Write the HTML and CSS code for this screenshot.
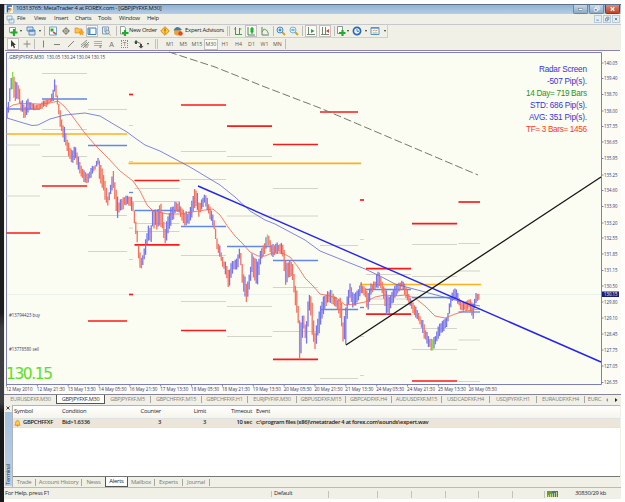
FILE: index.html
```html
<!DOCTYPE html>
<html lang="en">
<head>
<meta charset="utf-8">
<title>MetaTrader 4</title>
<link rel="stylesheet" href="styles.css">
</head>
<body>
<div class="window">
  <header class="titlebar">
    <svg class="applogo" viewBox="0 0 8 8"><rect width="8" height="8" fill="#f7f3dc"/><path d="M2.5 7.5V1H7M2.5 4H6" stroke="#2f58b0" stroke-width="1.6" fill="none"/><path d="M5 3l2 1-3 4" fill="#f0a020"/></svg>
    <span class="caption">10313765: MetaTrader 4 at FOREX.com - [GBPJPYFXF,M30]</span>
    <div class="winbtns">
      <i><svg viewBox="0 0 15 9"><rect x="5" y="4" width="5" height="2" fill="#fff" stroke="#567" stroke-width=".5"/></svg></i>
      <i><svg viewBox="0 0 15 9"><path d="M6.500 4V2h4v3.500h-2M5 4h3.500v3H5z" fill="none" stroke="#f4f8ff"/><path d="M5.500 5h2v1h-2z" fill="#456"/></svg></i>
      <i class="close"><svg viewBox="0 0 15 9"><path d="M5.500 2.500l4 4m0-4l-4 4" stroke="#fff" stroke-width="1.500"/></svg></i>
    </div>
  </header>
  <nav class="menubar">
    <svg viewBox="0 0 9 9" width="9" height="9"><path d="M1 1h5v4H1zM3 4h5v4H3z" fill="#e7f1f6" stroke="#7fa6c4" stroke-width=".8"/></svg>
    <span>File</span><span>View</span><span>Insert</span><span>Charts</span><span>Tools</span><span>Window</span><span>Help</span>
    <div class="mdi"><i><svg viewBox="0 0 8 8"><path d="M2 5.500h3" stroke="#53677f"/></svg></i><i><svg viewBox="0 0 8 8"><path d="M3.500 3V1.500h3v3H5M2 3.500h3v3H2z" fill="none" stroke="#53677f" stroke-width=".8"/></svg></i><i><svg viewBox="0 0 8 8"><path d="M2.500 2.500l3 3m0-3l-3 3" stroke="#53677f"/></svg></i></div>
  </nav>
  <div class="bar main">
    <svg viewBox="0 0 10 10"><path d="M1.500 1.500h6v5h-6z" fill="#fff" stroke="#8ca393"/><path d="M6 3v7M2.500 6.500h7" stroke="#1fae2c" stroke-width="2.200"/></svg>
    <b class="dd"></b>
    <svg viewBox="0 0 10 10"><path d="M1 1h6v4H1zM3 4h6v5H3z" fill="#cfe2f3" stroke="#5f8dbd"/><path d="M3 5h6" stroke="#3c78bd"/></svg>
    <b class="dd"></b><b class="sep"></b>
    <svg viewBox="0 0 10 10"><path d="M1.500 1h7v8h-7z" fill="#fff" stroke="#6fa5cf"/><path d="M2.500 2.500h3v3h-3z" fill="#23aa35"/><path d="M5 6l3 2" stroke="#e25022" stroke-width="1.600"/></svg>
    <svg viewBox="0 0 10 10"><circle cx="5" cy="5" r="2.500" fill="none" stroke="#78736a"/><path d="M5 1v8M1 5h8" stroke="#78736a" stroke-width=".8"/></svg>
    <svg viewBox="0 0 10 10"><path d="M1 2h3l1 1h3v4H1z" fill="#ffc247" stroke="#cb8521" stroke-width=".6"/><path d="M7.500 4l.8 1.800 1.600.1-1.200 1.200.4 2-1.600-1-1.600 1 .4-2L5 5.900l1.800-.1z" fill="#ffab19" stroke="#c97815" stroke-width=".4"/></svg>
    <svg class="on" viewBox="0 0 10 10"><path d="M1 2h8v6.500H1z" fill="#f8fcff" stroke="#3978b5"/><path d="M1.500 2.500h2v6h-2z" fill="#5897d3"/></svg>
    <svg viewBox="0 0 10 10"><path d="M1.500 1h6v7h-6z" fill="#e4edf5" stroke="#7d9dbd"/><path d="M3 3h3M3 5h2" stroke="#7296b8"/><circle cx="6.500" cy="6" r="1.800" fill="#cfe7ef" stroke="#77817b" stroke-width=".8"/><path d="M8 7.500l1.500 2" stroke="#d69a22"/></svg>
    <b class="sep"></b>
    <svg viewBox="0 0 10 10"><path d="M1.500.5h4l1 1.500v6h-5z" fill="#fff" stroke="#7d8a80" stroke-width=".8"/><path d="M6 4v6M3 7h6.500" stroke="#1fae2c" stroke-width="2.200"/></svg>
    <span>New Order</span>
    <svg viewBox="0 0 10 10"><path d="M5 .7L9.300 5 5 9.300.7 5z" fill="#ffcb3d" stroke="#d78b13"/><path d="M5 2.500v3M5 6.500v1" stroke="#a95a12" stroke-width="1.200"/></svg>
    <svg viewBox="0 0 10 10"><circle cx="4.500" cy="6" r="3.500" fill="#e8a340"/><path d="M.5 4.500Q2 1 4.500 1T9 4z" fill="#3e7db3"/><circle cx="7.500" cy="7.500" r="2.200" fill="#e9451f"/></svg>
    <span>Expert Advisors</span>
    <b class="sep dbl"></b>
    <svg viewBox="0 0 10 10"><path d="M2.500 1v8M6.500 2v6M2 8.500h7M2.500 3H1M6.500 3h2" stroke="#4c9658" fill="none"/></svg>
    <svg class="on" viewBox="0 0 10 10"><path d="M2 1v8h7" stroke="#4c8458" fill="none"/><path d="M6 1v7" stroke="#10891a"/><path d="M4.500 2h3v4.500h-3z" fill="#18b525"/></svg>
    <svg viewBox="0 0 10 10"><path d="M2 1v8h7" stroke="#627d67" fill="none"/><path d="M2 6l2-3 3 1.500 1.500 3.500" fill="none" stroke="#63a36d"/></svg>
    <b class="sep"></b>
    <svg viewBox="0 0 10 10"><path d="M6 6l3 3" stroke="#d7a021" stroke-width="1.800"/><circle cx="4" cy="4" r="3" fill="#dff1fa" stroke="#428ac3"/><path d="M2.500 4h3M4 2.500v3" stroke="#1674bd"/></svg>
    <svg viewBox="0 0 10 10"><path d="M6 6l3 3" stroke="#d7a021" stroke-width="1.800"/><circle cx="4" cy="4" r="3" fill="#dff1fa" stroke="#74b3d9"/><path d="M2.500 4h3" stroke="#1674bd"/></svg>
    <b class="sep"></b>
    <svg class="on" viewBox="0 0 10 10"><path d="M2.500 1v8M1 8.500h8" stroke="#75847b"/><path d="M5 3l3.500 2L5 7z" fill="#29a33b"/></svg>
    <svg class="on" viewBox="0 0 10 10"><path d="M2.500 1v8M1 8.500h8M5.500 1v7" stroke="#75847b"/><path d="M9 3L6 5l3 2z" fill="#cc4939"/></svg>
    <b class="sep"></b>
    <svg viewBox="0 0 10 10"><path d="M1.500.5h5v7h-5z" fill="#fff" stroke="#8b958d"/><path d="M6.500 4v6M3 7h6.500" stroke="#1fae2c" stroke-width="2.200"/></svg>
    <b class="dd"></b>
    <svg viewBox="0 0 10 10"><circle cx="5" cy="5" r="3.600" fill="#eef7ff" stroke="#2469bd" stroke-width="1.700"/><path d="M5 3v2.300h2" stroke="#345" fill="none" stroke-width=".7"/></svg>
    <b class="dd"></b>
    <svg viewBox="0 0 10 10"><path d="M1 1.500h8v7H1z" fill="#fff" stroke="#6291bd"/><path d="M1 2h8" stroke="#5b93d1" stroke-width="1.500"/><path d="M2.500 5l2-1 1 1 2-1" stroke="#cb6d3c" stroke-width=".7" fill="none"/><path d="M2.500 7h5" stroke="#60a065" stroke-width=".8"/></svg>
    <b class="dd"></b>
  </div>
  <div class="bar tools">
    <svg class="on" viewBox="0 0 10 10"><path d="M3 1v7l1.700-1.500 1.200 2.700 1.200-.6L6 6h2z" fill="#3c3a37"/></svg>
    <svg viewBox="0 0 10 10"><path d="M5 1.500v7M1.500 5h7" stroke="#85817a" stroke-width=".9"/></svg>
    <b class="sep"></b>
    <svg viewBox="0 0 10 10"><path d="M5.500 1.500v7" stroke="#85817a"/></svg>
    <svg viewBox="0 0 10 10"><path d="M2 5.500h6" stroke="#85817a"/></svg>
    <svg viewBox="0 0 10 10"><path d="M2 8l6-6" stroke="#85817a"/></svg>
    <svg viewBox="0 0 10 10"><path d="M1 6l6-5M3 9l6-6M1 8l6-5M4 6h5M5 8h3" stroke="#77736d" stroke-width=".8"/></svg>
    <svg viewBox="0 0 10 10"><path d="M1 2.500h8M1 4.500h8M1 6.500h6" stroke="#aaa59b" stroke-width=".9"/><path d="M7 9V6.500h2M7 8h1.500" stroke="#77736d" stroke-width=".7" fill="none"/></svg>
    <em>A</em><em class="boxed">T</em>
    <svg viewBox="0 0 10 10"><path d="M2 1l2.500 2.500H3V5H1V3.500H0zM6 5h2v2h1.500L7 9.500 4.500 7H6z" fill="#4c4944"/><path d="M4 3.500l3 1" stroke="#777"/></svg>
    <b class="dd"></b><b class="sep dbl"></b>
    <span>M1</span><span>M5</span><span>M15</span><span class="on">M30</span><span>H1</span><span>H4</span><span>D1</span><span>W1</span><span>MN</span><b class="sep"></b>
  </div>
  <main class="chart">
    <svg id="plot" width="616" height="344" viewBox="5 50 616 344">
      <path d="M5 50.500H620" stroke="#8f83a8"/>
      <path d="M6.500 384V52.500H601.500V384.500H6.500" fill="#fbfcf2" stroke="#7d80b4"/>
      <path d="M7 294.500H601" stroke="#e3f0ee" stroke-width=".8"/>
      <g id="levels"></g>
      <path class="dash" d="M169 52L215 67 265 87 320 108 478 175"/>
      <g id="candles"></g>
      <polyline class="ma slow" points="7,118 20,122 32,125.500 38,125 50,119 65,115 85,113 100,116 115,125 127,132 135,138 145,145 160,151 175,159 190,167 205,176 220,185 235,197 250,211 265,220 275,224 290,232 305,240 320,251 335,257 350,263 365,269 380,276 395,284 410,288 425,292 440,296 455,300 465,303 480,306"/>
      <polyline class="ma fast" points="8,108 13,105 20,103.500 40,104 50,103 58,101 64,106 70,113 84,132 95,145 108,158 120,171 133,181 140,191 147,205 153,211 168,214 180,214 192,212 205,210 213,209 220,215 228,227 235,236 243,244 250,252 258,256 265,256 272,253 282,253 290,257 298,267 305,278 313,286 320,294 330,296 338,299 345,305 355,304 365,302 375,297 385,295 395,296 405,295 415,298 425,306 435,316 445,318 455,314 465,311 480,309"/>
      <path d="M198 186L601 362" stroke="#2424f0" stroke-width="1.400"/>
      <path d="M346 345L601 177" stroke="#161616" stroke-width="1.300"/>
      <g id="axes"></g>
      <text class="tiny" x="8" y="58.500" textLength="36" lengthAdjust="spacingAndGlyphs">.GBPJPYFXF,M30</text>
      <text class="tiny" x="46.500" y="58.500" textLength="58.500" lengthAdjust="spacingAndGlyphs">130.05 130.24 130.04 130.15</text>
      <text class="tiny" x="9" y="317.200" textLength="31" lengthAdjust="spacingAndGlyphs">#13794423 buy</text>
      <text class="tiny" x="9" y="351.300" textLength="30" lengthAdjust="spacingAndGlyphs">#13778580 sell</text>
      <text x="6" y="379" class="price" textLength="47">130.15</text>
      <g class="radar">
        <text x="587" y="72" textLength="48" fill="#3535d8">Radar Screen</text>
        <text x="587" y="84" textLength="40" fill="#3535d8">-507 Pip(s).</text>
        <text x="587" y="96" textLength="61" fill="#289328">14 Day= 719 Bars</text>
        <text x="587" y="108" textLength="57" fill="#3535d8">STD: 686 Pip(s).</text>
        <text x="587" y="120" textLength="58" fill="#3535d8">AVG: 351 Pip(s).</text>
        <text x="587" y="132" textLength="61" fill="#ff3a22">TF= 3 Bars= 1456</text>
      </g>
    </svg>
  </main>
  <nav class="charttabs">
    <span>EURUSDFXF,M30</span><span class="active">GBPJPYFXF,M30</span><span>GBPJPYFXF,M5</span><span>GBPCHFFXF,M15</span><span>GBPCHFFXF,H1</span><span>EURJPYFXF,M30</span><span>GBPUSDFXF,M15</span><span>GBPCADFXF,H4</span><span>AUDUSDFXF,M15</span><span>USDCADFXF,H4</span><span>USDJPYFXF,H1</span><span>EURAUDFXF,H4</span><span>EURC.</span>
    <svg viewBox="0 0 14 8" width="14" height="8"><path d="M3 2v4L1 4z" fill="#99958c"/><path d="M10 2v4l2.500-2z" fill="#222"/></svg>
  </nav>
  <section class="terminal">
    <aside><svg viewBox="0 0 6 6" width="6" height="6"><path d="M1.500 1.500l3 3m0-3l-3 3" stroke="#444"/></svg><div class="grip"><span>Terminal</span></div></aside>
    <div class="panel">
      <div class="row head"><span>Symbol</span><span>Condition</span><span class="r">Counter</span><span class="r">Limit</span><span class="r">Timeout</span><span>Event</span></div>
      <div class="row item"><span><svg viewBox="0 0 8 8" width="7" height="8"><path d="M1 6.500Q2 5 2 3Q2.500 1 4 1T6 3Q6 5 7 6.500z" fill="#ffd04a" stroke="#e28b16" stroke-width=".9"/><circle cx="4" cy="7" r=".9" fill="#d9730e"/></svg>GBPCHFFXF</span><span>Bid&gt;1.6336</span><span class="r">3</span><span class="r">3</span><span class="r">10 sec</span><span>c:\program files (x86)\metatrader 4 at forex.com\sounds\expert.wav</span></div>
      <div class="blank"></div>
      <nav class="termtabs"><span>Trade</span><span>Account History</span><span>News</span><span class="active">Alerts</span><span>Mailbox</span><span>Experts</span><span>Journal</span></nav>
    </div>
  </section>
  <footer class="status">
    <span>For Help, press F1</span><span>Default</span><i></i><i></i><i></i><i></i><i></i><i></i>
    <i class="net"><svg viewBox="0 0 11 6" width="11" height="6"><rect width="11" height="6" fill="#3f7896"/><path d="M0 0h5v6H0z" fill="#6f9a2c"/><path d="M1.500 6V4M3.500 6V3M5.500 6V2.500M7.500 6V2M9.500 6V1" stroke="#d9e9a0" stroke-width=".8"/></svg></i>
    <span>30830/29 kb</span>
  </footer>
</div>
<script src="chart.js"></script>
</body>
</html>
```

FILE: styles.css
```css
* { box-sizing: border-box; }
html, body { margin: 0; height: 502px; overflow: hidden; }
body {
  background: #fefefe;
  font: 5.9px/1 "Open Sans", "Noto Sans", sans-serif;
  letter-spacing: -.25px;
  color: #28282e;
  display: flex;
}
body::before { content: ""; flex: 0 0 4px; background: linear-gradient(#1d1d20 0 62%, #3d3e43 65% 80%, #18181a 82%); margin-top: 4px; }
.window {
  width: 617px; height: 495px; margin-top: 4px;
  display: flex; flex-direction: column;
  background: #f1f0e6;
  white-space: nowrap;
}
span { white-space: nowrap; }

.titlebar { height: 10px; display: flex; align-items: center; background: linear-gradient(#5b7288 0 1px, #92b1d2 1px, #b5cee6); }
.applogo { width: 8px; height: 8px; margin-left: 1px; }
.caption { margin-left: 3px; color: #10161f; }
.winbtns { margin-left: auto; display: flex; gap: 1px; margin-right: 1px; }
.winbtns i { width: 15px; height: 9px; border: 1px solid #6b87a7; border-top: 0; background: linear-gradient(#c4d6e8, #8fabc8); border-radius: 0 0 2px 2px; display: flex; }
.winbtns svg { width: 100%; height: 100%; }
.winbtns .close { background: linear-gradient(#de8b76, #c24226); border-color: #7d3c34; }

.menubar {
  height: 11px; display: grid; align-items: center;
  grid-template-columns: 11px 17px 20px 21px 23px 21px 28px 1fr auto;
  padding-left: 2px; border-bottom: 1px solid #c7c7cf;
}
.mdi { display: flex; gap: 1px; margin-right: 1px; }
.mdi i { width: 8px; height: 8px; border: 1px solid #b7cad8; background: #e3eef4; display: flex; }
.mdi svg { width: 100%; height: 100%; }

.bar { display: grid; align-items: center; justify-items: center; justify-content: start; }
.bar svg { width: 10px; height: 10px; }
.main {
  height: 13px; width: 384px; padding-left: 4px;
  grid-template-columns: 10px 6px 14px 4px 5px 11px 15px 12px 14px 14px 6px 9px 30px 14px 12px 41px 7px 12px 14px 14px 2px 13px 14px 3px 13px 15px 4px 10px 4px 14px 3px 16px 3px;
  border-bottom: 1px solid #d1cfcb; border-right: 1px solid #d1cfcb;
}
.main span { color: #1c1c1c; }
.dd { border: 1.5px solid transparent; border-top: 2px solid #333; border-bottom: 0; }
.sep { width: 1px; height: 10px; background: #bdbbb9; }
.sep.dbl { width: 3px; background: none; border: solid #c4c2bf; border-width: 0 1px; }
.on { background: #faf9f3; outline: 1px solid #c2c1bd; }
.tools { height: 12px; grid-template-columns: 18px 10px 4px 14px 14px 14px 13px 14px 13px 13px 15px 3px 14px 14px 13px 14px 14px 14px 13px 13px 13px 13px 3px; }
.tools em { font: 7px "Liberation Sans", sans-serif; color: #74706a; }
.tools .boxed { border: 1px dotted #8b877f; width: 7px; height: 8px; line-height: 6px; text-align: center; font-size: 6px; }
.tools span { font: 5.3px/9px "Open Sans", sans-serif; letter-spacing: 0; color: #5a5752; }
.tools span.on { width: 12px; text-align: center; }

.chart { height: 344px; margin-left: 1px; background: #fcfcf5; }
.chart > svg { display: block; letter-spacing: 0; }
#plot .tiny, #plot .tick { font: 5.2px "Open Sans", sans-serif; fill: #34346a; }
#plot .now { fill: #fff; }
#plot .price { font: 15.5px "DejaVu Sans", sans-serif; fill: #5ce01e; }
.radar text { font: 8.2px "Liberation Sans", sans-serif; text-anchor: end; }
.dash { fill: none; stroke: #77776d; stroke-dasharray: 8 3; }
.ma { fill: none; stroke-width: .8; }
.slow { stroke: #6266d8; }
.fast { stroke: #f4604e; }

.charttabs {
  height: 10px; display: grid; align-items: center;
  grid-template-columns: 51px 49px 46px 51px 46px 49px 49px 46px 50px 48px 47px 48px 20px 15px;
  border-top: 1px solid #858397; padding-left: 1px;
  font-size: 5.6px; color: #85827c;
}
.charttabs span { height: 7px; line-height: 7px; text-align: center; border-right: 1px solid #aaa7a0; overflow: hidden; }
.charttabs .active { height: 9px; line-height: 9px; background: #fff; color: #333; border: 1px solid #555; border-top: 0; }
.charttabs span:first-child, .charttabs span:nth-child(13) { border: 0; }

.terminal { height: 83px; display: flex; padding: 1px 1px 0 1px; }
aside { width: 7px; display: flex; flex-direction: column; }
.grip { flex: 1; margin: 1px 0 1px; background: linear-gradient(#a5c1df, #b9d0ea); display: flex; align-items: flex-end; }
.grip span { writing-mode: vertical-rl; transform: rotate(180deg); font-size: 5.5px; line-height: 7px; color: #21344f; padding-top: 1px; }
.panel { flex: 1; display: flex; flex-direction: column; background: #fff; border: 1px solid #b5b4b4; border-width: 1px 0 0 1px; }
.row { display: grid; grid-template-columns: 48px 55px 45px 45px 46px 1fr; align-items: center; }
.row span { padding-left: 1px; display: flex; align-items: center; }
.row .r { justify-content: flex-end; }
.row span:last-child { padding-left: 4px; }
.head { height: 12px; background: linear-gradient(#fff, #f6f4ea); }
.item { height: 10px; background: #ebe6d9; border: solid #dbe4e6; border-width: 1px 0; color: #1d1b17; font-weight: 600; font-size: 5.8px; letter-spacing: -.28px; }
.item span:first-child { gap: 2px; }
.blank { flex: 1; }
.termtabs { height: 11px; background: #f1f0e6; border-top: 1px solid #777; display: grid; grid-template-columns: 23px 46px 23px 23px 27px 28px 27px; color: #7d7a74; align-items: center; }
.termtabs span { text-align: center; border-right: 1px solid #aaa69e; height: 7px; line-height: 7px; }
.termtabs .active { background: #fff; color: #222; border: 1px solid #555; border-top: 0; height: 10px; line-height: 9px; }
.termtabs span:nth-child(3) { border-right: 0; }

.status { flex: 1; border-top: 1px solid #bfb6c4; display: grid; align-items: center; grid-template-columns: 267px 57px 49px 34px 34px 33px 34px 32px 1fr 46px; padding-top: 1px; }
.status span:first-child { padding-left: 1px; }
.status span:nth-child(2) { border-left: 1px solid #c5c2bd; padding-left: 2px; }
.status i { border-left: 1px solid #c5c2bd; height: 7px; }
.status .net { padding-left: 2px; display: flex; align-items: center; }
```

FILE: chart.js
```js
const NS = "http://www.w3.org/2000/svg";
function add(parent, tag, attrs, text) {
  const el = document.createElementNS(NS, tag);
  for (const k in attrs) el.setAttribute(k, attrs[k]);
  if (text) el.textContent = text;
  document.getElementById(parent).appendChild(el);
}

// Session pivots: x range, then y positions by colour
const sessions = [
  [6.5, 40, { g: [145, 196], b: [109], r: [233] }],
  [42, 87, { g: [73.5, 129.5, 156.5], b: [99], r: [186] }],
  [88, 127, { g: [109.5, 215.5, 251.5], b: [145.5], r: [321] }],
  [129, 133, { g: [125.5, 161.5, 228, 259.5], b: [192.5], r: [94.5, 294.5] }],
  [134.5, 179.5, { g: [188.5, 201.5, 223.5, 231.5], b: [210.5], r: [180.5, 244.8] }],
  [181, 226, { g: [151.5, 179.5, 255.5, 301.5], b: [226.5], r: [105, 330.5] }],
  [227, 272, { g: [156.5, 216, 306.5, 336.5], b: [246.5], r: [126.2] }],
  [273, 318, { g: [188.5, 216, 287.5, 331.5], b: [260.5], r: [144.5, 359.3] }],
  [320, 358, { g: [245.5, 378.5], b: [309.5], r: [112] }],
  [360, 364, { g: [239.5, 336.5, 375.5], b: [307.5], r: [200] }],
  [366, 411, { g: [274.5, 299, 304.5], b: [289.5], r: [268.6, 314.2] }],
  [412, 457, { g: [244.5, 276.5, 328.5, 349.5], b: [297.5], r: [223.6, 381] }],
  [458.5, 480, { g: [243.5, 271, 340, 381.5], b: [312], r: [202] }]
];
const ink = { g: ["#cfcfc6", 0.9], b: ["#6287e6", 1.3], r: ["#fb1a1a", 1.7] };
for (const [a, b, ys] of sessions)
  for (const c in ys)
    for (const y of ys[c]) add("levels", "path", { d: `M${a} ${y}H${b}`, stroke: ink[c][0], "stroke-width": ink[c][1] });
for (const [a, b, y] of [[6.5, 127, 134], [128.5, 361, 163.4], [360, 481, 284.5]])
  add("levels", "path", { d: `M${a} ${y}H${b}`, stroke: "#ffb01c", "stroke-width": 1.6 });

// Price envelope: x, high, low
const env = `7 107 118,9 95 112,12 69 85,14 74 102,17 82 104,19 82 102,21 98 112,25 103 121,28 97 113,30 101 110,35 104 111,40 103 111,45 98 108,50 98 104,53 90 102,55 76 92,57 90 103,60 106 128,62 122 136,65 128 145,68 140 156,72 150 166,75 145 160,78 155 169,80 162 176,84 170 182,88 172 184,92 166 176,95 164 171,98 158 165,100 157 187,102 164 190,105 178 200,108 195 208,110 185 200,113 168 190,115 180 202,117 195 222,119 200 215,122 195 212,126 194 206,130 195 207,133 198 215,135 216 230,137 226 242,139 246 266,142 256 272,145 240 260,148 226 240,151 222 247,153 205 228,157 210 230,160 198 225,163 212 232,165 224 250,168 214 236,172 204 225,176 200 212,180 202 216,184 210 226,188 212 225,191 205 222,194 186 208,196 186 210,199 200 218,201 200 212,205 193 204,208 199 215,211 209 222,214 218 230,217 235 252,223 257 268,229 268 290,233 258 272,237 258 273,240 243 260,243 268 293,247 285 305,250 270 290,252 252 272,254 250 286,257 262 290,260 250 268,263 243 258,268 233 246,272 243 258,278 242 254,283 242 258,286 260 293,288 258 280,292 260 276,295 278 310,298 298 320,300 320 375,302 320 350,303 307 325,306 325 350,308 300 330,310 285 305,312 300 335,315 331 352,319 307 337,323 297 315,327 290 306,331 288 304,335 295 308,338 298 312,341 292 325,343 318 347,346 302 345,348 292 308,350 280 302,353 293 310,357 290 304,361 282 294,365 284 298,368 293 314,371 282 298,375 280 290,379 266 288,383 283 297,386 288 315,389 296 315,393 288 305,397 282 295,402 280 288,406 284 300,410 297 306,414 303 316,418 311 320,422 318 330,425 325 342,428 335 348,432 338 352,435 335 348,438 326 340,442 320 334,447 316 327,450 300 312,453 286 300,457 290 302,461 302 312,465 300 312,469 297 310,473 300 320,476 293 305,480 291 299`
  .split(",").map(p => p.split(" ").map(Number));
const greens = [12, 268, 332, 433];
let k = 0;
for (let i = 0; i < 338; i++) {
  const x = 7 + i * 1.4;
  while (k < env.length - 2 && env[k + 1][0] < x) k++;
  const [x0, h0, l0] = env[k], [x1, h1, l1] = env[k + 1];
  const t = Math.min(1, (x - x0) / (x1 - x0));
  const hi = h0 + (h1 - h0) * t, lo = l0 + (l1 - l0) * t, span = lo - hi;
  const n = Math.abs(Math.sin(i * 12.9898) * 43758.5) % 1, m = Math.abs(Math.sin(i * 78.233) * 12543.1) % 1;
  const slope = (h1 + l1 - h0 - l0) / (x1 - x0);
  const up = slope / 12 + (n - 0.5) * 1.6 < 0;
  const colour = greens.some(g => Math.abs(g - x) < 0.7) ? "#8ade52" : up ? "#7675f0" : "#f8715c";
  add("candles", "path", { d: `M${x.toFixed(1)} ${(hi + span * 0.24 * n).toFixed(1)}V${(lo - span * 0.24 * m).toFixed(1)}`, stroke: colour, "stroke-width": 1.3 });
}

// Price scale
const prices = ["140.05", 63, "139.40", 78.5, "138.70", 94.5, "138.00", 111, "137.35", 126.5, "136.65", 142, "135.95", 158.5, "135.25", 175, "134.60", 190.5, "133.90", 206.5, "133.20", 223, "132.55", 238, "131.85", 254, "131.15", 270.5, "130.50", 286, "129.80", 302, "129.10", 318, "128.45", 334, "127.75", 350, "127.05", 366, "126.35", 382.5];
const fit = { class: "tick", lengthAdjust: "spacingAndGlyphs" };
for (let i = 0; i < prices.length; i += 2) {
  const y = prices[i + 1];
  add("axes", "path", { d: `M601 ${y}h2.500`, stroke: "#7d80b4" });
  add("axes", "text", { ...fit, x: 604, y: y + 1.9, textLength: 13.5 }, prices[i]);
}
add("axes", "rect", { x: 602, y: 291.5, width: 17, height: 5.5, fill: "#1d1d6e" });
add("axes", "text", { ...fit, x: 604, y: 296.2, class: "tick now", textLength: 13.5 }, "130.15");

// Time scale
["12 May 2010", "12 May 21:30", "13 May 13:30", "14 May 05:30", "16 May 21:30", "17 May 13:30", "18 May 05:30", "18 May 21:30", "19 May 13:30", "20 May 05:30", "20 May 21:30", "21 May 13:30", "24 May 05:30", "24 May 21:30", "25 May 13:30", "26 May 05:30"].forEach((s, i) => {
  const x = 6 + i * 30.85;
  add("axes", "path", { d: `M${x + 0.5} 384v2.500`, stroke: "#7d80b4" });
  add("axes", "text", { ...fit, x, y: 390.8, textLength: i ? 28 : 26.5 }, s);
});
```
